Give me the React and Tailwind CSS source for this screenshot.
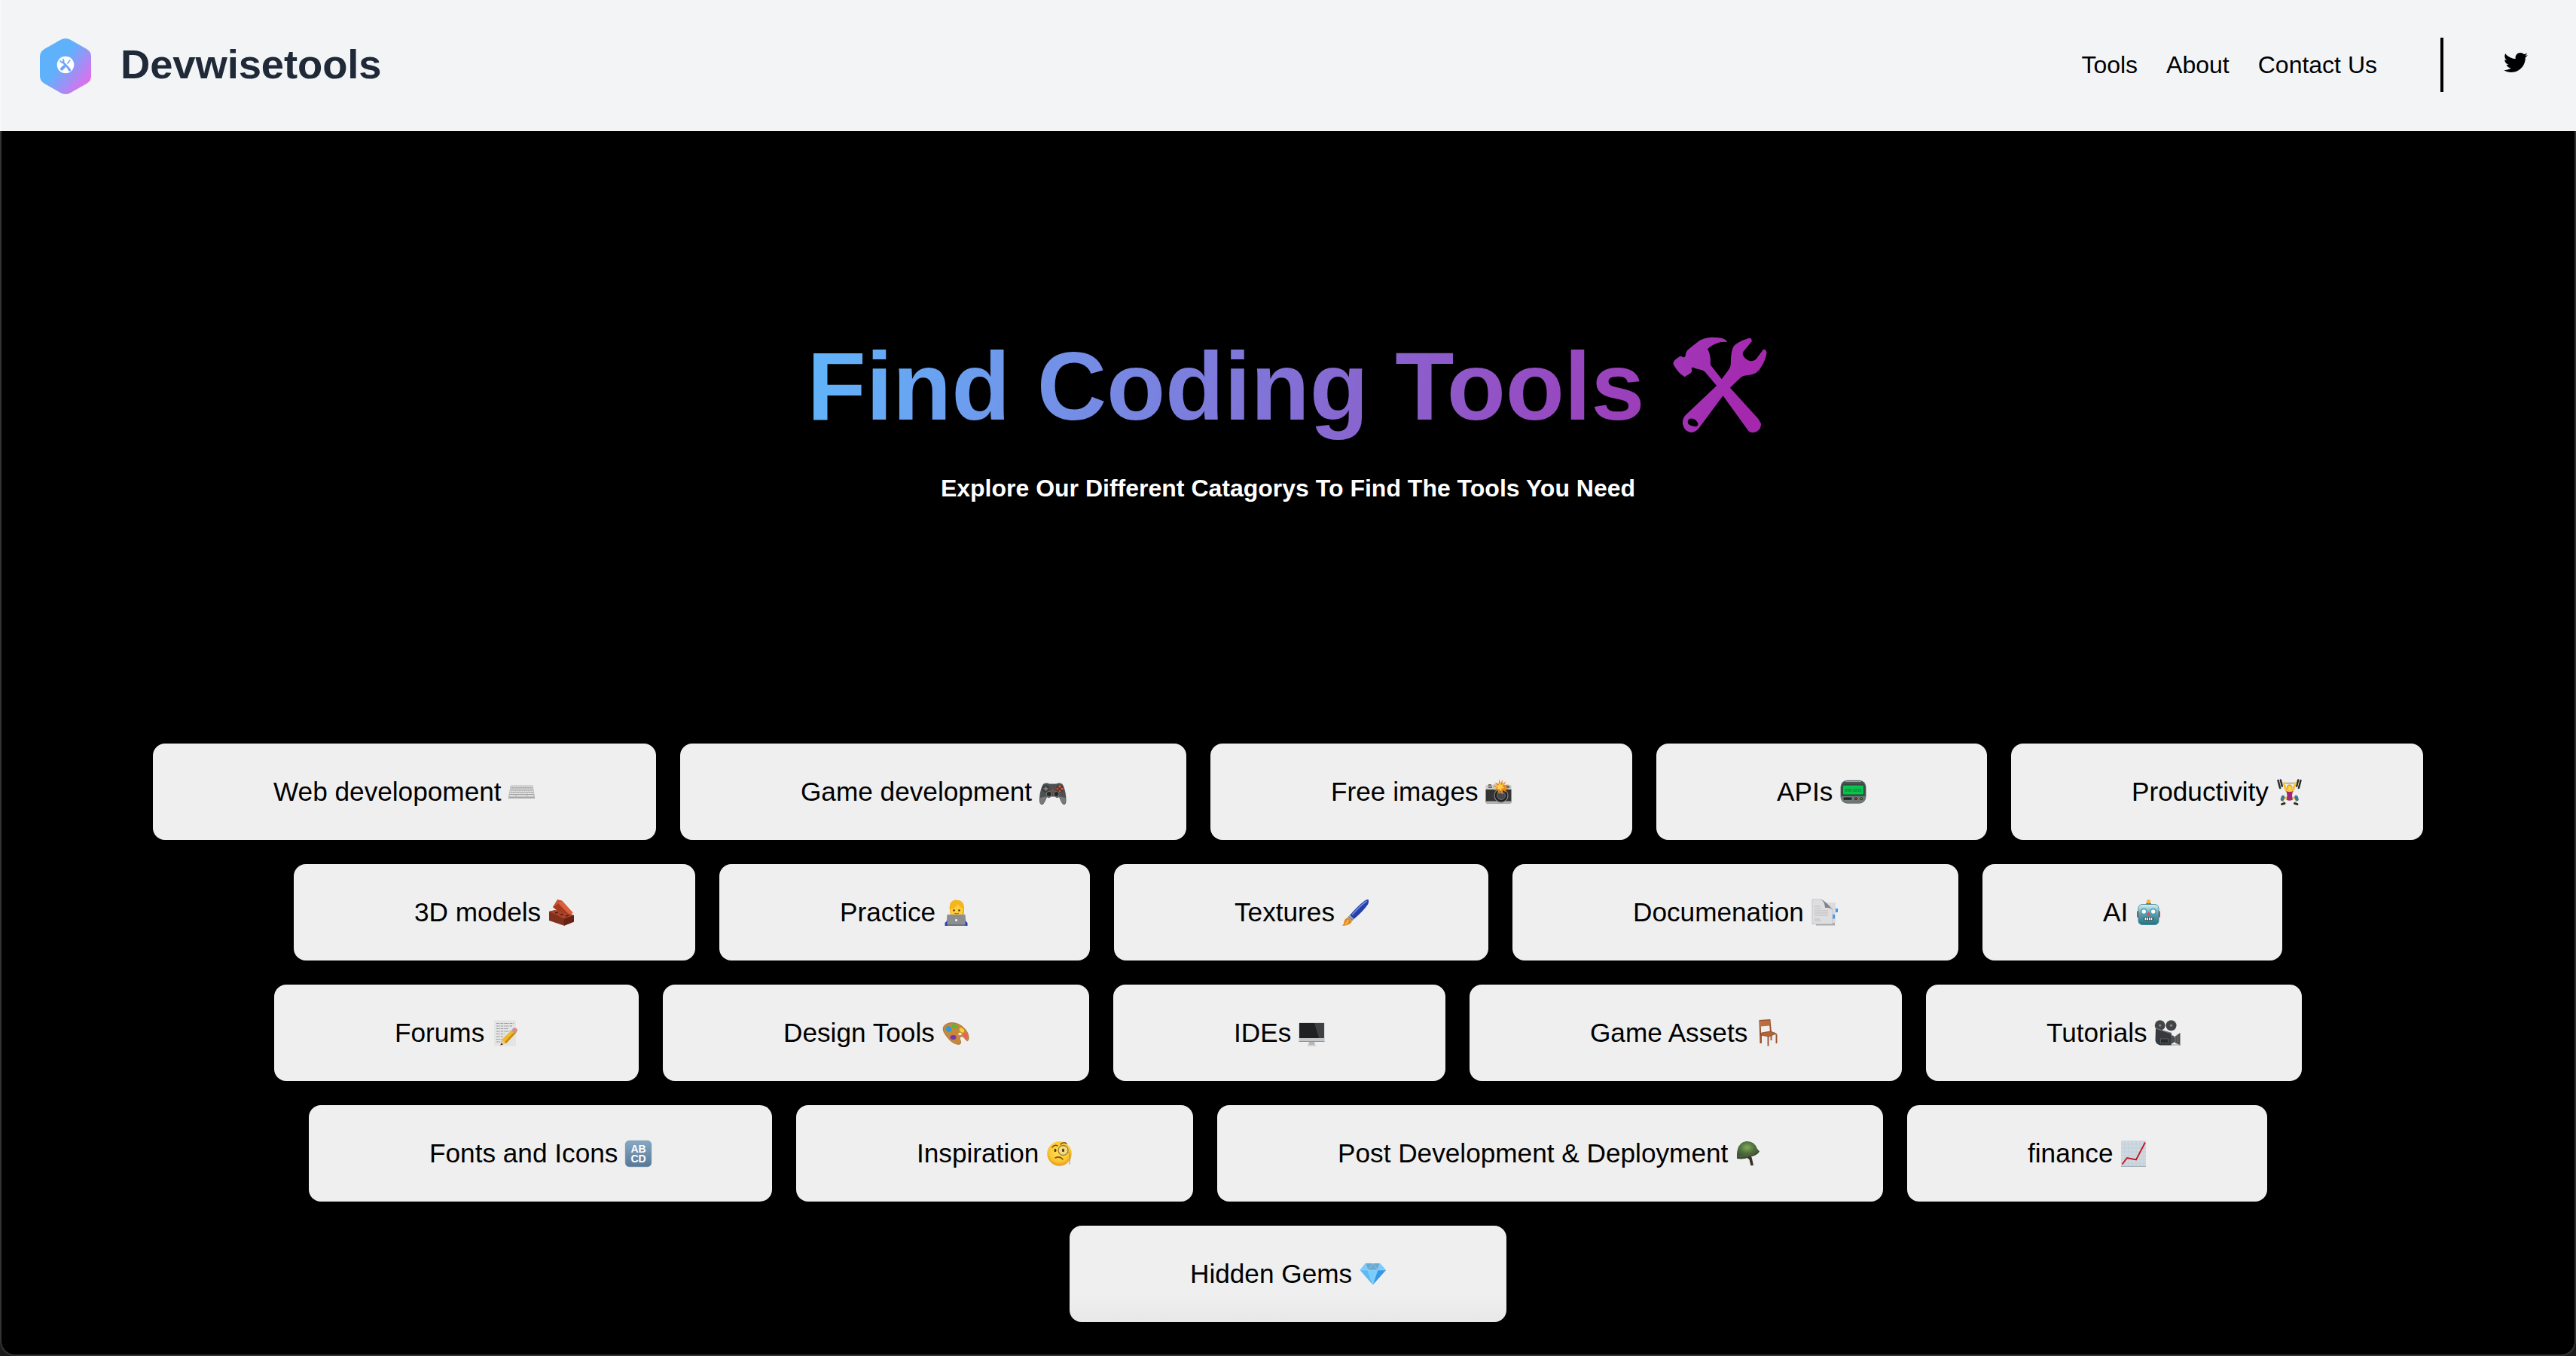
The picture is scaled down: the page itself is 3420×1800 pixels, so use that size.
import { FaTwitter } from "react-icons/fa";

function Emoji({ children }) {
  return (
    <svg viewBox="0 0 35 35" className="ml-[9.8px] h-[35px] w-[35px] shrink-0 overflow-visible">
      {children}
    </svg>
  );
}

const Keyboard = () => (
  <Emoji>
    <path d="M3 8.5h29.5l2.5 15v2.2H0v-2.2z" fill="#bcbcbe" />
    <path d="M0 24h35v1.8H0z" fill="#a8a8aa" />
    <path d="M3.5 10.5h28.5M3 13.4h29.6M2.4 16.3h30.6M2 19.2h31.6" stroke="#ececec" strokeWidth="1.7" strokeDasharray="1.9 .5" />
    <path d="M1.6 22.2h8M11 22.2h13M25.4 22.2h8" stroke="#ececec" strokeWidth="1.6" />
    <path d="M3.4 11.8h28.6M2.8 14.8h30M2.2 17.7h31M1.7 20.6h32" stroke="#98989a" strokeWidth=".8" />
  </Emoji>
);

const Gamepad = () => (
  <Emoji>
    <path d="M5 7c2-2 6-2 8-.5h9.500c2-1.500 6-1.500 8 .5 3 4 5 14 5 21 0 5-1.500 6.500-3.500 6-2.500-1-4.500-7-6-10-1.500 1.500-4 1.300-5.200-.5h-5.600C14 25.300 11.500 25.500 10 24c-1.500 3-3.500 9-6 10-2 .5-4-1-4-6C0 21 2 11 5 7z" fill="#4e5152" />
    <path d="M1 25c-1 7 .5 9 3 8s4-7 6-10zM34.500 25c1 7-.5 9-3 8s-4-7-6-10z" fill="#777a7a" />
    <circle cx="8.500" cy="13" r="4.800" fill="#393b3c" />
    <path d="M8.500 10v6M5.500 13h6" stroke="#7e8080" strokeWidth="2" />
    <circle cx="12.800" cy="20" r="3.600" fill="#252729" stroke="#7d7f80" />
    <circle cx="22.500" cy="20" r="3.600" fill="#252729" stroke="#7d7f80" />
    <circle cx="27" cy="13" r="5" fill="#393b3c" />
    <circle cx="27" cy="9.900" r="1.600" fill="#ef5b32" /><circle cx="27" cy="16" r="1.600" fill="#e14920" />
    <circle cx="24" cy="13" r="1.600" fill="#e14920" /><circle cx="30.100" cy="13" r="1.600" fill="#ef5b32" />
    <circle cx="17.600" cy="15.500" r="1.100" fill="#e5482b" />
  </Emoji>
);

const FlashCamera = () => (
  <Emoji>
    <path d="M2 8h8l2-2h11l2 2h8q1.500 0 1.500 1.500v5H.5v-5Q.5 8 2 8z" fill="#c9c8c4" />
    <path d="M.5 14h34v16.500q0 2-2 2h-30q-2 0-2-2z" fill="#333334" />
    <path d="M.5 29.500h34v1.500q0 1.700-2 1.700h-30q-2 0-2-1.700z" fill="#b4b3af" />
    <path d="M4 7h4v2H4zM4 10h5v2H4zM28 9h4v3h-4z" fill="#6d6c69" />
    <circle cx="21" cy="22" r="9" fill="#1e1f20" stroke="#828384" strokeWidth="1.300" />
    <circle cx="21" cy="22" r="5.500" fill="#46484a" stroke="#6c6e70" />
    <path d="M18 19q3-2 6 .5" stroke="#b4b9be" fill="none" />
    <path d="M18.500 0l1.500 6 3-5-.5 6 5-4-2.500 5 6-.5-4.500 3.500 5 2.500-6-.5 2 5-4-3-1.500 5.500-2-5-4 4.500 1-6-5.500 1.500 4-4-6-2 6.500-.5-3-5 4.500 3z" fill="#ee8519" />
    <path d="M19.500 4l1 4 4-1-2 3 3 2-4 .5-.5 4-2.500-3.500-3 1 1-3-3-2 4-.5z" fill="#ffd448" />
  </Emoji>
);

const Pager = () => (
  <Emoji>
    <rect x=".5" y="1.700" width="34" height="31" rx="9" fill="#6f7474" />
    <path d="M1 12Q2 3 9 2h17q7 1 8 10v11H1z" fill="#465052" />
    <path d="M7 3.500h21" stroke="#a1a5a5" strokeWidth="1.200" />
    <rect x="3.300" y="8" width="28.400" height="13" rx="1.800" fill="#09c44b" stroke="#293b35" />
    <text x="17.500" y="16.500" textAnchor="middle" fontSize="5.200" fontWeight="bold" fill="#087d35" fontFamily="Liberation Sans">555-3215</text>
    <rect x="4" y="24" width="12" height="4.300" rx="1.500" fill="#202527" stroke="#9ba0a0" strokeWidth=".6" />
    <circle cx="21" cy="26.200" r="2.500" fill="#202527" stroke="#9ba0a0" strokeWidth=".6" /><circle cx="21" cy="26.200" r="1" fill="#dd3341" />
    <circle cx="28" cy="26.200" r="2.500" fill="#202527" stroke="#9ba0a0" strokeWidth=".6" /><circle cx="28" cy="26.200" r="1" fill="#37d548" />
  </Emoji>
);

const Lifter = () => (
  <Emoji>
    <path d="M7 5.500h21" stroke="#888d91" strokeWidth="1.200" />
    <path d="M2.500 2l2.600 10M5.800 1.500l2 8M32.500 2l-2.600 10M29.200 1.500l-2 8" stroke="#292d31" strokeWidth="2.500" strokeLinecap="round" />
    <path d="M10 6l3.500 10M25.500 6L22 16" stroke="#f7bd2d" strokeWidth="2.700" strokeLinecap="round" />
    <circle cx="10.300" cy="5.800" r="1.900" fill="#ffca35" /><circle cx="25.200" cy="5.800" r="1.900" fill="#ffca35" />
    <ellipse cx="17.700" cy="11.800" rx="3.900" ry="4.600" fill="#e4a51e" /><ellipse cx="18" cy="12.500" rx="2.700" ry="3.400" fill="#ffd13e" />
    <path d="M13.500 16q4 2 8.500 0l-1 6 1 5.500q-4.500 2.500-8.500 0l1-5.500z" fill="#a32672" />
    <path d="M14 25l-5 1M22 25l5 1" stroke="#f7bd2d" strokeWidth="3.300" />
    <path d="M9 24l-1 3M26.500 24l1 3" stroke="#3c7598" strokeWidth="4.500" strokeLinecap="round" />
    <path d="M9 29l1 3M26.500 29l-1 3" stroke="#f7bd2d" strokeWidth="2.500" />
    <path d="M7.500 33.500l3.500-1M24.500 32.500l3.500 1" stroke="#22262e" strokeWidth="2.800" strokeLinecap="round" />
  </Emoji>
);

const Bricks = () => (
  <Emoji>
    <path d="M12 0l6 1.500 14.500 16-4 4-10-1.500L6 10z" fill="#c9522f" />
    <path d="M18 1.500l14.500 16-4 3.500L13.500 5.500z" fill="#d8613c" />
    <path d="M6 10l7.500-4.500L28.500 21l-10-1z" fill="#a63a20" />
    <path d="M1 16l8-2 25 7v8.500L21 34.700 1 28z" fill="#82301e" />
    <path d="M1 16l8-2 25 7-13 4.500z" fill="#a9432a" />
    <path d="M21 25.500l13-4.500v8.500l-13 5.200z" fill="#672216" />
    <path d="M9 18l4-1M16 20.500l4-1M23 22l4-1" stroke="#501b12" strokeWidth="1.500" />
  </Emoji>
);

const Technologist = () => (
  <Emoji>
    <path d="M4 35q0-10 9-11h9q9 1 9 11z" fill="#3042bb" />
    <path d="M9 17V9q1-7 8-8 10-1 11 9v9l-4 2H11z" fill="#f3af1d" />
    <path d="M10 13q0-8 8-8t8 8v3q-1 7-8 7t-8-7z" fill="#ffcf39" />
    <path d="M8.500 13Q8 2 16 .5 27 0 27.500 12q-5-1-8-6-3 6-10 7z" fill="#f5b51c" />
    <circle cx="14.500" cy="14.500" r="1.300" fill="#50320e" /><circle cx="21.500" cy="14.500" r="1.300" fill="#50320e" />
    <path d="M15 18.200q3 1.500 6 0" stroke="#9e5d0b" fill="none" />
    <path d="M5.500 20h24l1 13h-26z" fill="#8c8e91" /><path d="M3.500 33h28v2h-28z" fill="#6f7276" />
    <path d="M2.500 35v-4l3-3v7zM32.500 35v-4l-3-3v7z" fill="#3042bb" />
    <ellipse cx="17.500" cy="27.500" rx="1.400" ry="1.800" fill="#f8f8f8" />
  </Emoji>
);

const Brush = () => (
  <Emoji>
    <path d="M35 .5q-1.500-1.500-5 1Q20 9 10 21l5 5.500Q27.500 16 34 6.500q1.500-3 1-6z" fill="#2440a8" />
    <path d="M32.500 2Q23 9 13 20.500" fill="none" stroke="#6b8be4" strokeWidth="1.800" />
    <path d="M10 20.500l5.500 5.500-4 4.500-6-5z" fill="#a9acb2" /><path d="M8.500 22.500l5.500 5" stroke="#5f6267" />
    <path d="M6 24.500q6.500.5 6.500 5.500Q9 35 0 34.700 3 32 2.500 29q1-3.500 3.500-4.500z" fill="#df8a21" />
    <path d="M4 33q3-2 4-6" stroke="#ffd175" strokeWidth="1.300" fill="none" />
  </Emoji>
);

const Tabs = () => (
  <Emoji>
    <path d="M6 5h25v29.500H6z" fill="#a9abae" />
    <path d="M8 4h24v27H8z" fill="#dbdcdd" />
    <path d="M32 12h3v5h-3zM27.500 20H31v5.500h-3.500z" fill="#3998f5" />
    <path d="M1 0h12q4 1 5 8 8 0 10 6v18.500H1z" fill="#dedee0" stroke="#bdbec0" strokeWidth=".8" />
    <path d="M13 0q7 3 15 14-4-4-10-3 0-7-5-11z" fill="#808285" />
    <path d="M4 9h8M4 12h9M4 15h18M4 18h18M4 21h18M4 26h7M4 28.500h9" stroke="#b7b8ba" strokeWidth=".9" />
  </Emoji>
);

const Robot = () => (
  <Emoji>
    <defs><linearGradient id="botface" x2="0" y2="1"><stop stopColor="#d9f1f2" /><stop offset=".5" stopColor="#5f9ba5" /><stop offset="1" stopColor="#207486" /></linearGradient></defs>
    <path d="M13.500 7q1-3 4-3t4 3z" fill="#614a7d" /><circle cx="17.500" cy="2.800" r="2.700" fill="#fcb52a" />
    <rect x="2" y="15" width="4" height="9" rx="1.500" fill="#d63f48" /><rect x="29" y="15" width="4" height="9" rx="1.500" fill="#d63f48" />
    <rect x="4" y="6.500" width="27" height="27" rx="5" fill="url(#botface)" stroke="#338292" strokeWidth=".8" />
    <circle cx="11.300" cy="16" r="3.500" fill="#fff" stroke="#2aa6c8" strokeWidth="1.600" /><circle cx="23.700" cy="16" r="3.500" fill="#fff" stroke="#2aa6c8" strokeWidth="1.600" />
    <path d="M17.500 16l3 5.500h-6z" fill="#e54b51" />
    <rect x="11" y="23.500" width="13" height="4.500" rx="2" fill="#28434a" /><path d="M12.500 25.700h10" stroke="#fff" strokeWidth="3" strokeDasharray="1.800 .9" />
  </Emoji>
);

const Memo = () => (
  <Emoji>
    <path d="M3 .5h29V34.500H3z" fill="#e4e4e5" />
    <path d="M6 4.500h23M6 8h21M6 11.500h16M6 15h19M6 18.500h11M6 22h9M6 25.500h7M6 29h8" stroke="#939598" strokeWidth="1.100" strokeDasharray="3 .8 1.500 .7" />
    <path d="M27 13l5.500 3.500L19 31l-7.500 2.500L13 26z" fill="#f0b827" /><path d="M32.500 16.500L19 31l-2-1.500L30.500 15z" fill="#c98711" />
    <path d="M13 26l6 5-7.500 2.500z" fill="#e8c99a" /><path d="M12.300 30.500l2.500 2-3.300 1z" fill="#333" />
    <path d="M28 11q3-2 6 1.500 0 2.500-1.500 4L27 13z" fill="#ec8189" /><path d="M26.300 13.300l5.500 4" stroke="#9da2a4" strokeWidth="1.500" />
  </Emoji>
);

const Palette = () => (
  <Emoji>
    <path d="M6 5Q16 1 26 8q10 8 9 17-1 5-4 1-3-5-6-4-3 1-1 5 2 5-2 5.500Q13 32 6 22-4 10 6 5z" fill="#c7883d" stroke="#9c6125" strokeWidth=".7" />
    <ellipse cx="8.500" cy="12" rx="4" ry="3.500" fill="#2a9cdb" transform="rotate(40 8.500 12)" />
    <ellipse cx="16.500" cy="8.500" rx="3.700" ry="2.500" fill="#4bbf31" transform="rotate(25 16.500 8.500)" />
    <ellipse cx="26" cy="13.500" rx="3.700" ry="2.500" fill="#fbd137" transform="rotate(45 26 13.500)" />
    <ellipse cx="31" cy="21" rx="2.500" ry="3.500" fill="#f15b61" transform="rotate(-25 31 21)" />
    <ellipse cx="14.500" cy="23" rx="4" ry="3" fill="#7637ac" /><ellipse cx="23.500" cy="18.500" rx="2.300" ry="1.800" fill="#efefef" />
  </Emoji>
);

const Desktop = () => (
  <Emoji>
    <path d="M14 28h7l1 6.500h-9z" fill="#b6b9bc" /><path d="M11.500 33h12v1.500h-12z" fill="#d3d5d7" />
    <rect x=".5" y="3.500" width="34" height="25" rx="1" fill="#c5c8ca" />
    <path d="M1 4h33v20H1z" fill="#202123" /><path d="M21 4h13v20h-7z" fill="#3f4143" />
    <path d="M.5 28.500h34" stroke="#929598" />
  </Emoji>
);

const Chair = () => (
  <Emoji>
    <g transform="translate(-1.500 0)">
      <path d="M9 31L8 1l13-1 1.500 16" fill="none" stroke="#9c532c" strokeWidth="2" />
      <path d="M9 1.500l12-1 .5 7L9 8.500z" fill="#bb6d3d" />
      <path d="M10 17l12-2 8 3-10 4-11-2z" fill="#b56435" stroke="#7d3d20" strokeWidth=".7" />
      <path d="M9.500 20v11M19 22v12.500M30 19v12M23 20v7" stroke="#9c532c" strokeWidth="1.900" />
    </g>
  </Emoji>
);

const MovieCamera = () => (
  <Emoji>
    <circle cx="7.700" cy="7.200" r="6.900" fill="#414547" /><circle cx="22.500" cy="7.200" r="7" fill="#414547" />
    <circle cx="7.700" cy="7.200" r="1.600" fill="#85898c" /><circle cx="22.500" cy="7.200" r="1.600" fill="#85898c" />
    <path d="M2 11l21 6v16.500H8Q2 32 1.500 27z" fill="#363a3f" /><path d="M2 11l21 7" stroke="#7b8084" strokeWidth="1.200" />
    <rect x="8.500" y="25" width="10" height="5.500" fill="#27292d" stroke="#707276" strokeWidth=".6" />
    <path d="M22 20l4 1v9l-4 2zM26 23l8.500-6v17L26 29z" fill="#4a4e52" /><path d="M31 19v12M28 21v8" stroke="#777b7f" />
    <path d="M22 33h12" stroke="#a5a8ab" strokeWidth="1.200" />
  </Emoji>
);

const Letters = () => (
  <Emoji>
    <defs><linearGradient id="abcd" x2="0" y2="1"><stop stopColor="#86a8c6" /><stop offset="1" stopColor="#587996" /></linearGradient></defs>
    <rect x=".3" y=".3" width="34.400" height="34.400" rx="5" fill="url(#abcd)" stroke="#5e83a2" strokeWidth=".6" />
    <g fill="#fff" fontFamily="Liberation Sans" fontWeight="bold" fontSize="14" textAnchor="middle"><text x="17.500" y="16">AB</text><text x="17.500" y="28.800">CD</text></g>
  </Emoji>
);

const Monocle = () => (
  <Emoji>
    <defs><radialGradient id="monoface" cx=".5" cy=".4" r=".6"><stop stopColor="#ffe45a" /><stop offset=".7" stopColor="#fbc732" /><stop offset="1" stopColor="#e8981b" /></radialGradient></defs>
    <circle cx="17.500" cy="17.500" r="16.200" fill="url(#monoface)" />
    <circle cx="22.500" cy="13" r="6.500" fill="#f2dc8b" stroke="#9c7b31" strokeWidth="1.300" />
    <path d="M8 9q3-4 7-2M19 5q4-4 8-1" stroke="#7a4814" strokeWidth="1.500" fill="none" strokeLinecap="round" />
    <ellipse cx="12" cy="13" rx="1.500" ry="2.200" fill="#5f370f" /><ellipse cx="22.500" cy="13" rx="1.600" ry="2.300" fill="#5f370f" />
    <path d="M12 23q6-3 10 2" stroke="#85520f" strokeWidth="1.500" fill="none" strokeLinecap="round" />
    <path d="M30 15q2 8 1 17" stroke="#938464" strokeWidth="1.100" fill="none" strokeDasharray="1.500 .6" />
  </Emoji>
);

const Helmet = () => (
  <Emoji>
    <defs><radialGradient id="helmet" cx=".45" cy=".35" r=".65"><stop stopColor="#86a95d" /><stop offset=".5" stopColor="#4c713c" /><stop offset="1" stopColor="#304d35" /></radialGradient></defs>
    <path d="M15 18l5-1 2 7 2 9h-3.500l-2-8-5-3z" fill="#49372f" />
    <path d="M2 23Q1 3 14 1q11-1 15 10l3 3.500q-3 5.500-13 7-7 4-17 2.500z" fill="url(#helmet)" />
    <path d="M2 21q16 0 27-9" stroke="#6b5a42" strokeWidth="1.500" fill="none" />
    <path d="M5 23.500q16 0 25-8-3 5-11 6-7 3-14 2z" fill="#2c4224" />
    <path d="M18 21.500l2 3 2 8.500" stroke="#3b2e29" strokeWidth="3" fill="none" />
  </Emoji>
);

const Chart = () => (
  <Emoji>
    <path d="M1 0h33v34.700H1z" fill="#cfd9e1" />
    <path d="M1 5h33M1 10h33M1 15h33M1 20h33M1 25h33M1 30h33M6 0v34M11 0v34M16 0v34M21 0v34M26 0v34M31 0v34" stroke="#b7c8d4" strokeWidth=".5" />
    <path d="M1 33.700h33v1.300H1z" fill="#a7b1ba" />
    <path d="M2.500 31.500L9 23l12 2.500L33 2.500" fill="none" stroke="#c7161d" strokeWidth="1.900" />
  </Emoji>
);

const Gem = () => (
  <Emoji>
    <path d="M8 3h19l8 9-17.500 19.500L.5 12z" fill="#5cb9f5" />
    <path d="M8 3l3 9H.5zM27 3l-3 9h11z" fill="#7bcbfa" /><path d="M8 3h19l-3 9H11z" fill="#6aa9d2" />
    <path d="M11 12h13l-6.500 19.500z" fill="#7accfa" /><path d="M24 12h11L17.500 31.500z" fill="#3698e4" />
    <path d="M.5 12h34.500M11 12l6.500 19.500L24 12M8 3l3 9 7-9 6 9 3-9" stroke="#b9e6fd" strokeWidth=".4" fill="none" />
  </Emoji>
);

const rows = [
  [["Web developoment", Keyboard, "w-[668px]"], ["Game development", Gamepad, "w-[672px]"], ["Free images", FlashCamera, "w-[560px]"], ["APIs", Pager, "w-[439px]"], ["Productivity", Lifter, "w-[547px]"]],
  [["3D models", Bricks, "w-[533px]"], ["Practice", Technologist, "w-[492px]"], ["Textures", Brush, "w-[497px]"], ["Documenation", Tabs, "w-[592px]"], ["AI", Robot, "w-[398px]"]],
  [["Forums", Memo, "w-[484px]"], ["Design Tools", Palette, "w-[566px]"], ["IDEs", Desktop, "w-[441px]"], ["Game Assets", Chair, "w-[574px]"], ["Tutorials", MovieCamera, "w-[499px]"]],
  [["Fonts and Icons", Letters, "w-[615px]"], ["Inspiration", Monocle, "w-[527px]"], ["Post Development & Deployment", Helmet, "w-[884px]"], ["finance", Chart, "w-[478px]"]],
  [["Hidden Gems", Gem, "w-[580px]"]],
];

function Logo() {
  return (
    <svg viewBox="0 0 68 74" className="mt-1 h-[74px] w-[68px]">
      <defs>
        <linearGradient id="logo" x1=".1" y1=".15" x2=".95" y2=".85">
          <stop offset=".38" stopColor="#60b1fc" />
          <stop offset="1" stopColor="#e869ec" />
        </linearGradient>
      </defs>
      <path d="M28 1.500q6-3 12 0l22 12.500q6 3.500 6 10v26q0 6.500-6 10L40 72.500q-6 3-12 0L6 60q-6-3.500-6-10V24q0-6.500 6-10z" fill="url(#logo)" />
      <circle cx="34" cy="35" r="11.300" fill="#fff" />
      <g stroke="#6ea6f8" strokeLinecap="round" fill="none">
        <path d="M30.500 31.500l8.500 9" strokeWidth="2.600" />
        <path d="M38.500 41l1 1" strokeWidth="3.200" />
        <path d="M27.300 30q1 2.500 3.500 1.500 1.500-2 0-3.700" strokeWidth="1.900" />
        <path d="M39.800 29l-3 4" strokeWidth="1.600" />
        <path d="M32 37.500l-3 3" strokeWidth="4" />
      </g>
    </svg>
  );
}

function HammerAndWrench() {
  return (
    <svg viewBox="1168 78 280 384" preserveAspectRatio="none" className="mb-1 ml-[38px] h-[128px] w-[125px]">
      <defs>
        <linearGradient id="tools" x1="0" y1="0" x2="1" y2=".3">
          <stop stopColor="#a038b7" />
          <stop offset="1" stopColor="#a527ad" />
        </linearGradient>
      </defs>
      <path
        fill="url(#tools)"
        fillRule="evenodd"
        d="M1330 98Q1322 79 1282 80Q1258 83 1245 95L1216 126Q1205 138 1206 151Q1203 162 1200 160Q1190 153 1186 158L1173 172Q1167 181 1170 190Q1184 224 1203 238L1221 223Q1227 214 1223 203Q1226 197 1234 204L1250 209Q1258 210 1264 219L1298 273L1208 387Q1196 401 1197 424Q1200 452 1219 459Q1234 461 1246 441L1317 313L1391 450Q1399 465 1416 457Q1431 446 1430 424L1422 405L1338 281L1370 240Q1377 231 1389 232Q1420 230 1432 195Q1444 170 1447 140Q1442 121 1435 132L1415 168Q1401 182 1387 168Q1372 153 1377 138L1403 96Q1401 79 1393 84Q1366 95 1352 111Q1340 125 1340 190Q1339 202 1332 213L1313 247L1284 197Q1278 190 1280 177Q1279 143 1271 127Q1285 108 1310 99ZM1215 407Q1224 399 1236 410Q1247 425 1240 434Q1227 439 1214 426Q1210 414 1215 407Z"
      />
    </svg>
  );
}

export default function App() {
  return (
    <div className="flex h-[1800px] w-[3420px] flex-col overflow-hidden bg-[#1c1c1e] font-['Liberation_Sans',Arial,sans-serif] text-black">
      <header className="flex h-[174px] shrink-0 items-center justify-between border-l-2 border-[#f7f8f9] bg-[#f3f4f6] pr-[64px] pb-[2px] pl-[51px]">
        <div className="flex items-center">
          <Logo />
          <span className="ml-[39px] text-[54.4px] leading-[56px] font-bold tracking-[-0.1px] text-[#1f2937]">Devwisetools</span>
        </div>
        <nav className="flex items-center text-[32px] leading-[48px]">
          <a>Tools</a>
          <a className="ml-[38px]">About</a>
          <a className="ml-[38px]">Contact Us</a>
          <span className="ml-[84px] h-[72px] w-1 bg-black" />
          <FaTwitter className="mb-[6px] ml-20 h-8 w-8" />
        </nav>
      </header>
      <main className="flex flex-1 flex-col items-center rounded-b-[20px] border-x-2 border-b-2 border-[#333333] bg-black">
        <h1 className="mt-[275px] flex h-[128px] items-center pr-[2px] text-[128px] leading-[128px] font-bold">
          <span className="-mb-4 bg-[linear-gradient(100deg,#60b5fb_0%,#9d3cb9_100%)] bg-clip-text pb-4 tracking-[-0.12px] whitespace-nowrap text-transparent">Find Coding Tools</span>
          <HammerAndWrench />
        </h1>
        <p className="mt-[47px] text-[32px] leading-[48px] font-bold text-white">Explore Our Different Catagorys To Find The Tools You Need</p>
        <div className="mt-[315px] flex flex-col items-center gap-8">
          {rows.map((row, i) => (
            <div key={i} className="flex gap-8">
              {row.map(([label, Icon, width]) => (
                <button
                  key={label}
                  className={`flex h-32 items-center justify-start rounded-2xl pl-40 text-[35.2px] whitespace-nowrap ${width} ${i === 4 ? "bg-linear-to-b from-[#efefef] from-70% to-[#e8e8e8]" : "bg-[#efefef]"}`}
                >
                  {label}
                  <Icon />
                </button>
              ))}
            </div>
          ))}
        </div>
      </main>
    </div>
  );
}
